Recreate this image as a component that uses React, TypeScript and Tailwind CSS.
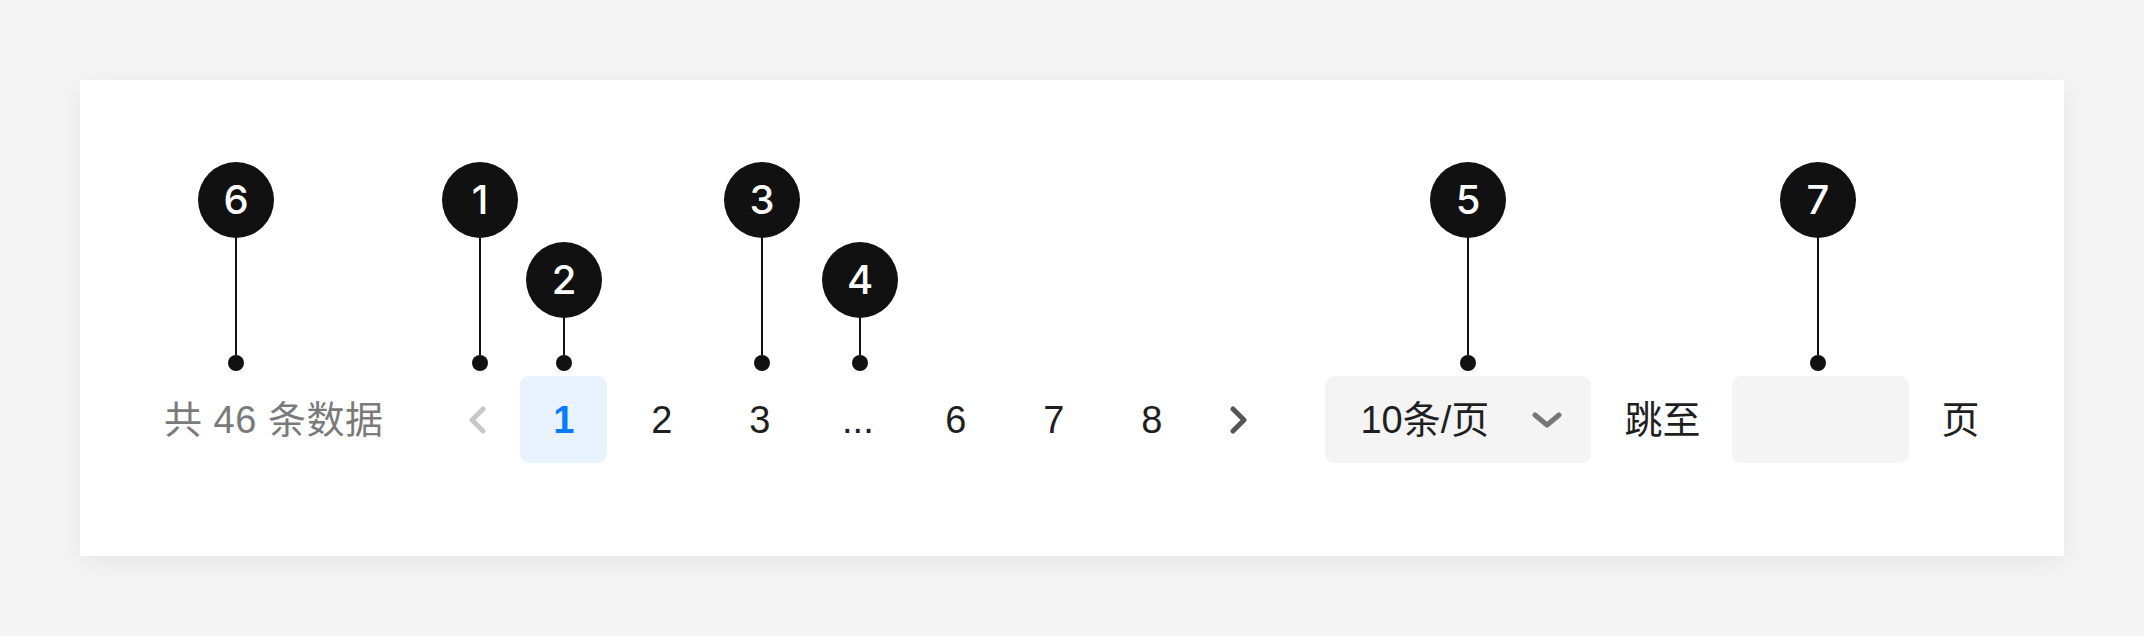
import * as React from "react";

const FONT = {
  fontFamily: '"Liberation Sans", "Noto Sans CJK SC", sans-serif',
};

interface PinProps {
  label: string;
  className: string;
  short?: boolean;
}

function Pin({ label, className, short }: PinProps) {
  return (
    <div className={`absolute flex w-[76px] flex-col items-center ${className}`}>
      <div className="flex h-[76px] w-[76px] items-center justify-center rounded-full bg-[#111111] font-['Inter',sans-serif] text-[40px] font-medium leading-none text-white">
        {label}
      </div>
      <div className={`w-[2px] bg-[#111111] ${short ? "h-[37px]" : "h-[117px]"}`} />
      <div className="h-[16px] w-[16px] rounded-full bg-[#111111]" />
    </div>
  );
}

function Chevron({ dir, color }: { dir: "left" | "right"; color: string }) {
  return (
    <svg width="19" height="28" viewBox="0 0 19 28" fill="none">
      <polyline
        points={dir === "left" ? "15,3 4,14 15,25" : "4,3 15,14 4,25"}
        stroke={color}
        strokeWidth="5"
        strokeLinecap="round"
        strokeLinejoin="round"
      />
    </svg>
  );
}

const pages = ["1", "2", "3", "...", "6", "7", "8"];

export default function App() {
  return (
    <div className="min-h-screen bg-[#f5f5f5] p-[80px]" style={FONT}>
      <div className="relative h-[476px] w-[1984px] bg-white shadow-[0_6px_28px_rgba(0,0,0,0.07)]">
        {/* Annotation pins */}
        <Pin label="6" className="left-[118px] top-[82px]" />
        <Pin label="1" className="left-[362px] top-[82px]" />
        <Pin label="2" className="left-[446px] top-[162px]" short />
        <Pin label="3" className="left-[644px] top-[82px]" />
        <Pin label="4" className="left-[742px] top-[162px]" short />
        <Pin label="5" className="left-[1350px] top-[82px]" />
        <Pin label="7" className="left-[1700px] top-[82px]" />

        {/* Pagination row */}
        <div className="flex items-center pl-[84px] pt-[296px] text-[38px] leading-none">
          <span className="whitespace-nowrap tracking-[0.5px] text-[#7a7a7a]">共 46 条数据</span>

          <div className="ml-[62px] flex items-center gap-[11px]">
            <button className="flex h-[87px] w-[64px] items-center justify-center">
              <Chevron dir="left" color="#c9c9c9" />
            </button>
            {pages.map((p) => (
              <button
                key={p}
                className={
                  p === "1"
                    ? "flex h-[87px] w-[87px] items-center justify-center rounded-[9px] bg-[#e8f3ff] font-semibold text-[#0a7aff]"
                    : "flex h-[87px] w-[87px] items-center justify-center text-[#1f1f1f]"
                }
              >
                {p}
              </button>
            ))}
            <button className="flex h-[87px] w-[64px] items-center justify-center">
              <Chevron dir="right" color="#555555" />
            </button>
          </div>

          <div className="ml-[55px] flex h-[87px] w-[266px] items-center justify-between rounded-[9px] bg-[#f4f4f4] pl-[35px] pr-[29px] text-[#1f1f1f]">
            <span>10条/页</span>
            <svg width="30" height="16" viewBox="0 0 30 16" fill="none">
              <polyline
                points="3,3 15,13 27,3"
                stroke="#777777"
                strokeWidth="5"
                strokeLinecap="round"
                strokeLinejoin="round"
              />
            </svg>
          </div>

          <span className="ml-[33px] text-[#1f1f1f]">跳至</span>
          <div className="ml-[32px] h-[87px] w-[177px] rounded-[9px] bg-[#f4f4f4]" />
          <span className="ml-[32px] text-[#1f1f1f]">页</span>
        </div>
      </div>
    </div>
  );
}
